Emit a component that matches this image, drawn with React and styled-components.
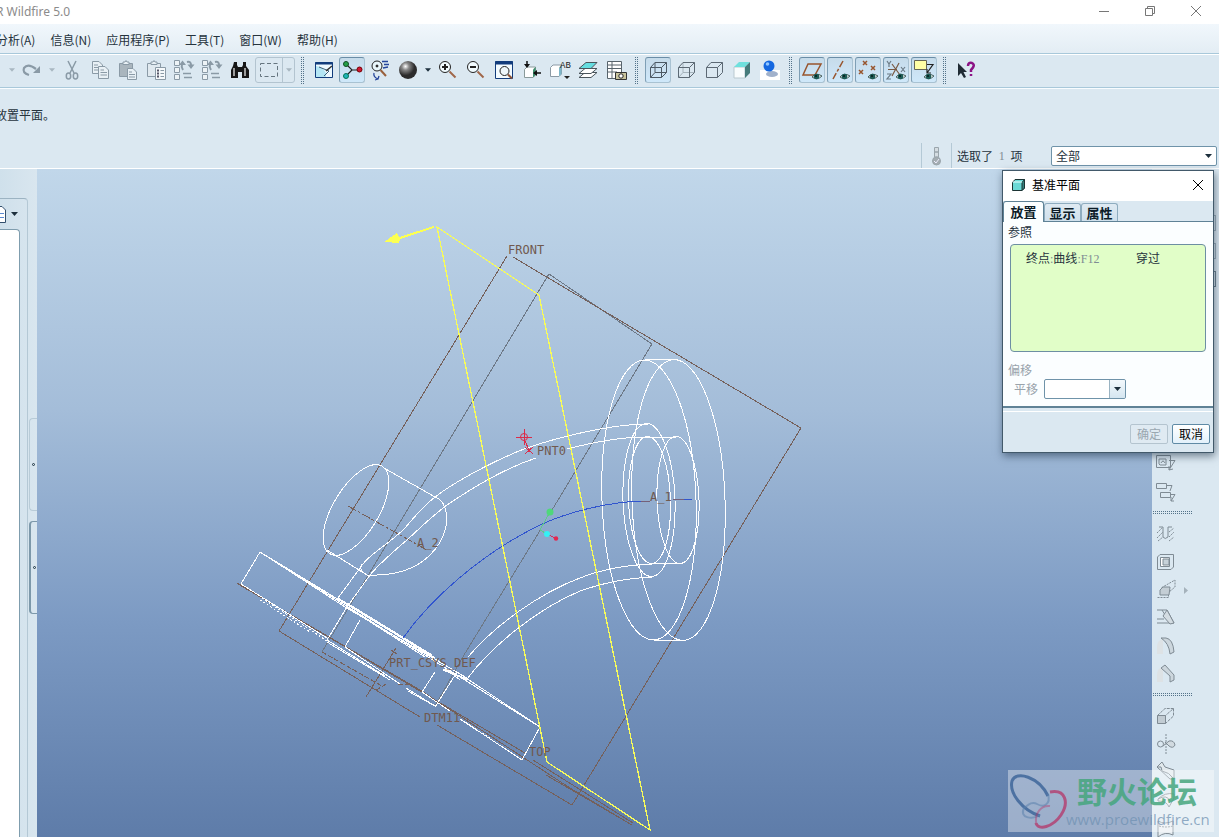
import React from "react";
import styled, { createGlobalStyle, css } from "styled-components";

const Global = createGlobalStyle`
  *, *::before, *::after { box-sizing: border-box; }
  body { margin: 0; background: #dbe8f1; }
  button, select { font: inherit; color: inherit; }
`;

const App_ = styled.div`
  min-height: 100vh;
  display: flex;
  flex-direction: column;
  overflow: hidden;
  font: 12px/16px "Noto Sans CJK SC", sans-serif;
  color: #26333d;
`;

/* ---------- window frame ---------- */
const TitleBar = styled.header`
  display: flex;
  justify-content: space-between;
  height: 24px;
  background: #fff;
`;
const Title = styled.h1`
  margin: 0 0 0 -4px;
  font: 12px/24px "Noto Sans", sans-serif;
  color: #8b8b8b;
`;
const WindowButtons = styled.div`
  display: flex;
`;
const WindowButton = styled.button`
  width: 46px;
  height: 21px;
  padding: 0;
  border: 0;
  background: none;
  color: #777;
  display: grid;
  place-items: center;
`;
const MenuBar = styled.nav`
  display: flex;
  align-items: center;
  gap: 15px;
  height: 30px;
  padding-top: 3px;
  border-bottom: 1px solid #a8c8da;
  background: linear-gradient(#f1f7fc, #e3edf4);
`;
const MenuItem = styled.button`
  padding: 0;
  border: 0;
  background: none;
  white-space: nowrap;
  &:first-child { margin-left: -4px; }
`;
const ToolBar = styled.div`
  display: flex;
  align-items: center;
  gap: 2px;
  height: 34px;
  padding-left: 7px;
  padding-bottom: 2px;
  border-top: 1px solid #fff;
  border-bottom: 1px solid #a8c8da;
  box-shadow: 0 1px #f8fcff;
`;
const toolLook = css`
  padding: 0;
  border: 1px solid transparent;
  border-radius: 3px;
  background: none;
  display: grid;
  place-items: center;
`;
const Tool = styled.button`
  ${toolLook}
  flex: none;
  width: 26px;
  height: 26px;
  ${(p) => p.$on && css`
    border-color: #6a8da6 #a9c2d2 #a9c2d2 #7f9fb5;
    background: linear-gradient(#c6dbea, #cfe8fa);
  `}
`;
const DropTool = styled(Tool)`
  width: 10px;
`;
const Grip = styled.span`
  flex: none;
  width: 12px;
  height: 27px;
  padding: 0 4px;
  background: conic-gradient(transparent 75%, #54738a 0) 0 0 / 2px 2px content-box;
`;
const RegionTool = styled.div`
  display: flex;
  width: 40px;
  height: 26px;
  border: 1px solid #b3c4d0;
  border-radius: 3px;
`;
const RegionPart = styled.button`
  ${toolLook}
  flex: ${(p) => (p.$arrow ? "0 0 12px" : "1")};
  border: 0;
  border-left: ${(p) => (p.$arrow ? "1px solid #b3c4d0" : "0")};
  border-radius: 0;
`;
const Message = styled.p`
  margin: 0 0 0 -5px;
  height: 54px;
  padding-top: 19px;
`;
const StatusRow = styled.div`
  display: flex;
  justify-content: flex-end;
  align-items: center;
  height: 27px;
  padding-top: 1px;
  padding-right: 2px;
  border-bottom: 1px solid #fff;
`;
const StatusCell = styled.span`
  display: flex;
  align-items: center;
  height: 25px;
  padding-left: ${(p) => p.$pad}px;
  width: ${(p) => p.$w}px;
  border-left: 1px solid #b4c9d6;
  white-space: pre;
`;
const Digit = styled.span`
  font-family: "Liberation Serif", serif;
  color: #7f8c94;
`;
const SelectBox = styled.span`
  display: grid;
  grid-template-columns: 1fr 15px;
  align-items: center;
  width: ${(p) => p.$w}px;
  height: 20px;
  border: 1px solid #6f93a9;
  border-radius: 2px;
  background: #fff;
  overflow: hidden;
  svg { grid-area: 1 / 2; justify-self: center; pointer-events: none; z-index: 1; }
  select {
    grid-area: 1 / 1 / 2 / 3;
    appearance: none;
    width: 100%;
    height: 18px;
    padding: 0 4px;
    border: 0;
    outline: 0;
    line-height: 18px;
    background: ${(p) => (p.$split ? "linear-gradient(#6f93a9, #6f93a9) right 15px top / 1px 100% no-repeat, linear-gradient(#eef6fb, #c3dbea) right / 15px 100% no-repeat" : "none")};
  }
`;

/* ---------- workspace ---------- */
const Workspace = styled.main`
  position: relative;
  flex: 1;
  display: flex;
  min-height: 668px;
`;
const LeftPane = styled.aside`
  flex: none;
  display: flex;
  width: 37px;
  padding-top: 29px;
  background: linear-gradient(90deg, #cfe0eb, #d9e6ef);
`;
const TreePane = styled.div`
  width: 28px;
  display: flex;
  flex-direction: column;
  border-top: 1px solid #9cb3c2;
  border-right: 1px solid #b4c8d5;
  border-top-right-radius: 4px;
`;
const TreeHead = styled.button`
  display: flex;
  align-items: center;
  gap: 4px;
  height: 30px;
  padding: 0;
  border: 0;
  background: none;
`;
const Tree = styled.div`
  flex: 1;
  width: 20px;
  border: solid #7f9dae;
  border-width: 1px 1px 0 0;
  border-top-right-radius: 4px;
  background: #fff;
`;
const Handles = styled.div`
  flex: 1;
  display: flex;
  flex-direction: column;
  gap: 10px;
  padding: 220px 0 0 1px;
`;
const Handle = styled.button`
  height: 93px;
  padding: 0;
  border: solid ${(p) => (p.$dark ? "#7c98aa" : "#b8cbd7")};
  border-width: 1px 0 1px ${(p) => (p.$dark ? 2 : 1)}px;
  border-radius: 4px 0 0 4px;
  background: none;
  display: grid;
  place-items: center;
`;
const Dot = styled.i`
  width: 3px;
  height: 3px;
  border: 1px solid #1c3340;
  border-radius: 50%;
`;
const Viewport = styled.section`
  flex: 1;
  min-width: 0;
  contain: size;
  background: linear-gradient(#c1d7ea, #a4bdd9 36%, #7c9ac3 68%, #5e7ca9);
`;
const Model = styled.svg`
  display: block;
  width: 100%;
  height: 100%;
  fill: none;
  shape-rendering: crispEdges;
  text { font: 12px "DejaVu Sans Mono", monospace; fill: #70594f; }
  circle { shape-rendering: auto; }
`;
const SideBar = styled.aside`
  flex: none;
  display: flex;
  width: 67px;
  contain: size;
  overflow: hidden;
`;
const SideColumn = styled.div`
  display: flex;
  flex-direction: column;
  gap: 2px;
  width: 40px;
  padding-top: 2px;
  padding-left: 1px;
`;
const OuterColumn = styled(SideColumn)`
  width: 24px;
  padding-top: 46px;
`;
const SideTool = styled(Tool)`
  display: flex;
  align-items: center;
  gap: 7px;
  width: 100%;
  padding-left: 1px;
  ${(p) => p.$frame && css`border-color: ${p.$frame}; border-radius: 0; height: 16px; margin-bottom: 10px;`}
`;
const SideGrip = styled.span`
  flex: none;
  height: 12px;
  padding: 4px 0;
  background: conic-gradient(transparent 75%, #54738a 0) 0 0 / 2px 2px content-box;
`;

/* ---------- dialog ---------- */
const Dialog = styled.form`
  position: absolute;
  top: 1px;
  right: 5px;
  width: 212px;
  border: 1px solid #42596a;
  background: #dbe8f1;
  box-shadow: 1px 3px 8px rgba(20, 40, 60, 0.55);
`;
const DialogTitle = styled.div`
  display: flex;
  align-items: center;
  height: 30px;
  padding: 0 9px 2px 8px;
  gap: 6px;
  background: #fff;
  color: #000;
  h2 { flex: 1; margin: 0; font-size: 12px; font-weight: 400; line-height: 16px; }
`;
const PlainButton = styled.button`
  padding: 0;
  border: 0;
  background: none;
  display: grid;
  place-items: center;
`;
const Tabs = styled.div`
  display: flex;
  align-items: flex-end;
  height: 20px;
`;
const Tab = styled.button`
  height: ${(p) => (p.$on ? 21 : 18)}px;
  margin-bottom: ${(p) => (p.$on ? -1 : 0)}px;
  width: ${(p) => (p.$on ? 41 : 37)}px;
  padding: 0;
  border: 1px solid ${(p) => (p.$on ? "#5f8296" : "#8eacbf")};
  border-bottom: 0;
  border-radius: 3px 3px 0 0;
  background: ${(p) => (p.$on ? "#fbfeff" : "linear-gradient(#dfeaf2, #cfe0ec)")};
  color: #0c1c28;
  font-weight: 700;
  font-size: 13px;
  line-height: 16px;
  z-index: ${(p) => (p.$on ? 1 : 0)};
`;
const DialogBody = styled.div`
  border: solid #5f8296;
  border-width: 1px 0 2px;
  background: #fbfeff;
  padding: 2px 7px 7px 5px;
`;
const References = styled.ul`
  list-style: none;
  height: 108px;
  margin: 4px 0 10px 2px;
  padding: 5px 0 0 15px;
  border: 1px solid #6d8fa3;
  border-radius: 4px;
  background: #e1fec8;
  li { display: grid; grid-template-columns: 110px 1fr; }
`;
const OffsetRow = styled.label`
  display: flex;
  align-items: center;
  gap: 6px;
  padding-left: 6px;
  margin-top: 1px;
`;
const Dim = styled.span`
  color: #98a3ab;
`;
const DialogFooter = styled.div`
  display: flex;
  justify-content: flex-end;
  gap: 4px;
  height: 41px;
  margin-top: 3px;
  border-top: 1px solid #fff;
  padding: 12px 3px 0;
`;
const DialogButton = styled.button`
  width: 38px;
  height: 20px;
  padding: 0;
  border: 1px solid #5f8aa5;
  border-radius: 2px;
  background: linear-gradient(#fff, #e3f1fb);
  color: #000;
  line-height: 16px;
  &:disabled { border-color: #b4c4cf; background: #dfeaf2; color: #9aa7b0; }
`;
const Watermark = styled.div`
  position: absolute;
  right: 5px;
  bottom: 5px;
  display: flex;
  width: 206px;
  height: 62px;
  background: rgba(255, 255, 255, 0.38);
  pointer-events: none;
`;
const Brand = styled.div`
  margin-left: -3px;
  white-space: nowrap;
  strong {
    display: block;
    padding-left: 11px;
    font: 700 30px/40px "Noto Sans CJK SC", sans-serif;
    color: rgba(69, 166, 125, 0.85);
  }
  span {
    display: block;
    font: 15px/18px "Open Sans", sans-serif;
    color: rgba(112, 145, 178, 0.75);
  }
`;

/* ---------- icons ---------- */
const Svg = ({ children, w = 22, h = 22, ...rest }) => (
  <svg width={w} height={h} viewBox={`0 0 ${w} ${h}`} fill="none" stroke="#8a9aa6" strokeWidth="1" aria-hidden="true" {...rest}>
    {children}
  </svg>
);
const Arrow = ({ color = "#1d2f3c", w = 7, h = 4 }) => (
  <svg width={w} height={h} viewBox="0 0 7 4" aria-hidden="true"><path d="M0 0H7L3.500 4Z" fill={color} /></svg>
);
const Eye = () => (
  <g stroke="none">
    <path d="M11 18Q15 13 21 17Q16 22 11 18Z" fill="#dfe9e8" stroke="#48605e" strokeWidth="1" />
    <circle cx="15.500" cy="17.500" r="2.700" fill="#1c5b55" /><circle cx="15" cy="17" r="1" fill="#041a1a" />
  </g>
);
const icons = {
  redo: <Svg strokeWidth="2.200"><path d="M8 16Q1 14 3 9Q7 4 15 10" /><path d="M19 7V14H12Z" fill="#8a9aa6" stroke="none" /></Svg>,
  cut: <Svg strokeWidth="1.500"><path d="M7 2L13 14M15 2L9 14" /><ellipse cx="7.500" cy="17" rx="2.200" ry="3" /><ellipse cx="14.500" cy="17" rx="2.200" ry="3" /></Svg>,
  copy: <Svg fill="#e8f0f5"><path d="M3.500 2.500H10L13.500 6V14.500H3.500Z" /><path d="M9.500 7.500H16L19.500 11V19.500H9.500Z" /><path d="M5 6H9M5 8.500H9M5 11H9M11.500 11H15M11.500 13.500H18M11.500 16H18" /></Svg>,
  paste: <Svg><path d="M2.500 4.500H15.500V17.500H2.500Z" fill="#a9b5bd" /><path d="M6 5.500V3H8L9 1.500L10 3H12V5.500Z" fill="#e8f0f5" /><path d="M10.500 9.500H16L19.500 13V20.500H10.500Z" fill="#e8f0f5" /><path d="M12 13H15M12 15.500H18M12 18H18" /></Svg>,
  pasteSpecial: <Svg><path d="M2.500 4.500H15.500V17.500H2.500Z" fill="#e0e9ef" /><path d="M6 5.500V3H8L9 1.500L10 3H12V5.500Z" fill="#e8f0f5" /><path d="M10.500 8.500H20.500V20.500H10.500Z" fill="#f5f9fb" /><path d="M12 11.500H14M12 14.500H14M12 17.500H14" stroke="#556" strokeWidth="2" /><path d="M15.500 11.500H19M15.500 14.500H19M15.500 17.500H19" /></Svg>,
  regen: <Svg><path d="M1.500 1.500H6.500V6.500H1.500ZM1.500 8.500H6.500V13.500H1.500ZM1.500 15.500H6.500V20.500H1.500Z" fill="#edf3f6" /><path d="M10 14.500H18M11 18.500H19" strokeWidth="1.500" /><path d="M10 11Q8 8 9 5M14 3Q18 2 18 6" strokeWidth="2" /><path d="M6 6L9.500 1.500L13 6ZM14.500 5.500H21.500L18 10Z" fill="#8a9aa6" stroke="none" /></Svg>,
  find: <Svg stroke="none" fill="#161616"><path d="M5 3H8V6L9 8V19H2V11L4 7ZM14 3H17V7L20 11V19H13V8L14 6Z" /><path d="M9 8H13V13H9Z" /><path d="M5 9V17M16 9V17" stroke="#c9c9c9" strokeWidth="1.500" /></Svg>,
  region: <Svg stroke="#65757f"><path d="M2.500 4.500H19.500V17.500H2.500Z" strokeDasharray="4 2.500" /></Svg>,
  repaint: <Svg><path d="M2.500 3.500H19.500V18.500H2.500Z" fill="#eef9ff" stroke="#123c7c" /><path d="M2 4.500H20" stroke="#123c7c" strokeWidth="2" /><path d="M3 7Q10 8 13 14V18H3Z" fill="#b4e6f5" stroke="none" /><path d="M6 8L16 12L11 17" stroke="#3b5f78" /><path d="M19 7L13 12" stroke="#333" strokeWidth="1.500" /></Svg>,
  spin: <Svg><path d="M5 5L11 11H18M11 11L5 17" stroke="#222" strokeWidth="1.200" /><circle cx="5" cy="5" r="2.500" fill="#23a047" stroke="#104d23" /><circle cx="18.500" cy="10.500" r="2.500" fill="#d01534" stroke="#700" /><circle cx="5" cy="17" r="2.500" fill="#20b5ba" stroke="#075" /></Svg>,
  orient: <Svg stroke="#222"><circle cx="8" cy="7" r="5" fill="#e9f6fb" /><circle cx="8" cy="7" r="1" fill="#222" /><path d="M11.500 11L17 17" stroke="#99603c" strokeWidth="2" /><path d="M13 2.500H19M15 5.500H20M14 9L19 8M5 14Q4 18 9 20L10 17M9 20L6 21" stroke="#25459b" strokeWidth="1.300" /></Svg>,
  shade: <Svg stroke="none"><defs><radialGradient id="ball" cx=".36" cy=".3"><stop stopColor="#fff" /><stop offset=".4" stopColor="#888" /><stop offset="1" stopColor="#2c2c2c" /></radialGradient></defs><circle cx="11" cy="11" r="9" fill="url(#ball)" /></Svg>,
  zoomIn: <Svg stroke="#222"><circle cx="8" cy="8" r="5.500" fill="#f1fbff" /><path d="M5 8H11M8 5V11" strokeWidth="2" /><path d="M12.500 12.500L18.500 18.500" stroke="#a0674a" strokeWidth="2" /></Svg>,
  zoomOut: <Svg stroke="#222"><circle cx="8" cy="8" r="5.500" fill="#f1fbff" /><path d="M5 8H11" strokeWidth="2" /><path d="M12.500 12.500L18.500 18.500" stroke="#a0674a" strokeWidth="2" /></Svg>,
  refit: <Svg><path d="M2.500 2.500H19.500V19.500H2.500Z" fill="#f3fbff" stroke="#123c7c" /><path d="M2 4H20" stroke="#123c7c" strokeWidth="3" /><circle cx="11.500" cy="12" r="4.500" fill="#eef7fb" stroke="#222" /><path d="M15 15.500L19 19.500" stroke="#8a5236" strokeWidth="2" /></Svg>,
  reorient: <Svg><path d="M3.500 10.500L6 8H14.500V16L12 18.500H3.500Z" fill="#fff" stroke="#8a9a9a" /><path d="M12 10.500L14.500 8V16L12 18.500Z" fill="#3b8e6c" stroke="none" /><path d="M6 2V6M20 14H15" stroke="#111" strokeWidth="1.500" /><path d="M3 5H9L6 9ZM16 11V17L12 14Z" fill="#111" stroke="none" /></Svg>,
  views: <Svg w={24}><path d="M2.500 8.500L5 6H13.500V15L11 17.500H2.500Z" fill="#fff" stroke="#8b9aa5" /><path d="M11 8.500L13.500 6V15L11 17.500Z" fill="#7db6c9" stroke="none" /><text x="12" y="9" fontSize="9" fontFamily="Liberation Mono, monospace" fill="#222" stroke="none">AB</text><path d="M16 17H22L19 20Z" fill="#222" stroke="none" /></Svg>,
  layers: <Svg stroke="#4a555c"><path d="M2 18.500L8 13.500H20L14 18.500Z" fill="#fff" /><path d="M2 14.500L8 9.500H20L14 14.500Z" fill="#fff" /><path d="M2 9.500L9 3.500H20L14 9.500Z" fill="#65dde0" /></Svg>,
  snapshot: <Svg stroke="#58646c"><path d="M2.500 2.500H16.500V19.500H2.500ZM2.500 6H16M2.500 9.500H16M2.500 13H12M7 2.500V19" fill="#fff" /><path d="M10.500 13.500H21.500V20.500H10.500Z" fill="#c9c49d" stroke="#333" /><circle cx="16" cy="17" r="2.200" fill="#fff" stroke="#222" /></Svg>,
  wire: <Svg stroke="#4c5964"><path d="M3.500 8.500H14.500V18.500H3.500ZM3.500 8.500L8 3.500H19.500L14.500 8.500M19.500 3.500V13.500L14.500 18.500M8 3.500V13.500H19.500M8 13.500L3.500 18.500" /></Svg>,
  hidden: <Svg stroke="#5c6974"><path d="M8 3.500V13.500H19.500M8 13.500L3.500 18.500" stroke="#a5b3bc" /><path d="M3.500 8.500H14.500V18.500H3.500ZM3.500 8.500L8 3.500H19.500L14.500 8.500M19.500 3.500V13.500L14.500 18.500" /></Svg>,
  noHidden: <Svg stroke="#5c6974"><path d="M3.500 8.500H14.500V18.500H3.500ZM3.500 8.500L8 3.500H19.500L14.500 8.500M19.500 3.500V13.500L14.500 18.500" /></Svg>,
  shaded: <Svg stroke="none"><path d="M3 8H14V19H3Z" fill="#f8fcfd" stroke="#b9c9d0" /><path d="M3 8L8 3H19L14 8Z" fill="#6fe0dd" /><path d="M14 8L19 3V14L14 19Z" fill="#457b7b" /></Svg>,
  realism: <Svg stroke="none"><path d="M1 11H21V21H1Z" fill="#fff" /><ellipse cx="13" cy="15" rx="6" ry="3" fill="#a1b1cb" /><circle cx="10" cy="7" r="5.500" fill="#1467e0" /><circle cx="8.500" cy="5" r="1.800" fill="#8fc5ff" /></Svg>,
  datumPlane: <Svg stroke="#98552e" strokeWidth="1.500"><path d="M7 5H20L14 16H2Z" /><Eye /></Svg>,
  datumAxis: <Svg stroke="#98552e" strokeWidth="1.500"><path d="M14 2L4 20" strokeDasharray="7 2 3 2" /><Eye /></Svg>,
  datumPoint: <Svg stroke="#98552e" strokeWidth="1.500"><path d="M6 2L10 6M10 2L6 6M14 7L18 11M18 7L14 11M2 11L6 15M6 11L2 15" /><Eye /></Svg>,
  datumCsys: <Svg stroke="#7a5a44" strokeWidth="1.200"><path d="M14 4L7 17M7 5L15 16M3 10.500H12" /><path d="M2 2L4 5L6 2M4 5V8M16 8L20 13M20 8L16 13M2 15H6L2 20H6" stroke="#6b7a85" /><Eye /></Svg>,
  annotation: <Svg><path d="M1.500 1.500H13.500V10.500H1.500Z" fill="#ffffa5" stroke="#665" /><path d="M14 5.500H20L14 14M14 10V14H18" stroke="#222" strokeWidth="1.200" /><Eye /></Svg>,
  help: <Svg stroke="none"><path d="M3 4V17L6 14L9 19L11 18L8.500 13H12Z" fill="#202b34" /><path d="M13 7Q13 3 17 4Q21 6 16 11V13M16 15V17" stroke="#8c1385" strokeWidth="2.500" /></Svg>,
};
const sideIcons = {
  annotate: <><path d="M1.500 2.500H15.500V14.500H1.500Z" /><path d="M4 11V6H11V12H5ZM6 10Q8 6 10 10" /><path d="M14 7.500H20L14 17V13M14 17L18 16" /></>,
  propagate: <><path d="M1.500 2.500H11.500V7.500H1.500ZM5.500 11.500H15.500V16.500H5.500Z" /><path d="M12 4.500H17L15 10M16 13.500H20L16 20M16 16V20H19" /></>,
  hole: <><path d="M4 4H8V14Q10 17 13 14V4H17" /><path d="M2 10L7 5M2 15L8 9M3 18L8 14M14 9L19 5M14 14L19 9M14 18L19 14" strokeDasharray="2 1" /></>,
  shell: <><path d="M2.500 6L5 3.500H18.500V16L16 18.500H2.500Z" /><path d="M5.500 6.500H14.500V15.500H5.500Z" fill="#fff" /><path d="M8 8V14H14V8Z" fill="#c7d2d9" /></>,
  rib: <><path d="M2.500 18.500H13.500V13.500L20 8V1L6 9" strokeDasharray="2 1" /><path d="M5 16V11L8 8H15L14 16Z" fill="#c4ced5" /></>,
  draft: <><path d="M2 3H12L19 16H15L7 3M2 12H9M2 16H16L8 8" /><path d="M8 9L12 3L19 16L15 17Z" fill="#d3dce2" /></>,
  round: <><path d="M2 12Q2 5 8 4V19H2Z" fill="#dde2e5" stroke="none" /><path d="M6 3H11Q18 4 19 17L15 19Q14 8 6 3Z" fill="#ccd6dd" /></>,
  chamfer: <><path d="M2 12Q2 5 8 4V19H2Z" fill="#dde2e5" stroke="none" /><path d="M6 5L10 2L19 12V17L15 19V13Z" fill="#ccd6dd" /></>,
  extrude: <><path d="M2.500 10.500H10.500V18.500H2.500Z" fill="#c2ccd3" /><path d="M2.500 10.500L10 3.500H18.500L10.500 10.500M18.500 3.500V11L10.500 18.500" strokeDasharray="3 1" /></>,
  mirror: <><path d="M11 1V21" strokeDasharray="2 1" /><circle cx="5.500" cy="11" r="3" /><path d="M8 13L14 8Q19 7 20 12Q18 16 14 13L10 9" fill="#d1dae0" /></>,
  sweep: <><path d="M2 6L7 1L10 6L19 9V18Q14 11 7 10L6 6Z" fill="#e1e9ed" /><path d="M2 6L15 18H19" /></>,
  blend: <><path d="M3 10Q10 3 19 5V9L14 18Q12 12 3 12Z" fill="#e8eef2" /><path d="M3 10Q12 5 15 12" /></>,
  boundary: <><path d="M3 4Q10 8 18 4V18Q10 14 3 20Z" fill="#e8eef2" /><path d="M4 9Q11 11 18 9" strokeDasharray="2 1" /></>,
};
const SideIcon = ({ name }) => <Svg stroke="#7f8b94">{sideIcons[name]}</Svg>;

const ToolButton = ({ id, label, on }) => <Tool type="button" $on={on} aria-label={label} aria-pressed={on}>{icons[id]}</Tool>;
const tools = (list) => list.map(([id, label, on], i) => <ToolButton key={id + i} id={id} label={label} on={on} />);

const menus = ["分析(A)", "信息(N)", "应用程序(P)", "工具(T)", "窗口(W)", "帮助(H)"];
const firstSide = ["annotate", "propagate"];
const secondSide = ["hole", "shell", "rib", "draft", "round", "chamfer"];
const thirdSide = ["extrude", "mirror", "sweep", "blend", "boundary"];

function PipeModel() {
  return (
    <Model viewBox="37 169 1115 668" preserveAspectRatio="xMinYMin slice" role="img" aria-label="弯管模型线框">
      <g stroke="#6d7886">
        <path d="M322 652L549 274L652 344L549 515M541 529L464 655L435 706" />
      </g>
      <g stroke="#75605a">
        <path d="M507 256L279 631L420 717M437 725L572 805L801 428L513 257" />
        <path d="M237 583L525 753M533 760L633 823M238 584L420 690L570 788L632 825L546 775" />
        <path d="M396 648L366 697M391 650L397 654" />
        <path d="M348 506L427 550" strokeDasharray="9 2 3 2" />
        <path d="M322 652L382 686M398 684H410M376 690L388 683" strokeDasharray="5 2" />
      </g>
      <g stroke="#fff">
        <g transform="rotate(-2 649 500)">
          <ellipse cx="649" cy="500" rx="47" ry="140" />
          <ellipse cx="649" cy="500" rx="26" ry="76.500" />
          <ellipse cx="649.500" cy="500" rx="21" ry="63.500" />
        </g>
        <g transform="rotate(-2 678 500)">
          <ellipse cx="678.500" cy="500" rx="46.500" ry="140.500" />
          <ellipse cx="678" cy="500" rx="21" ry="63.500" />
        </g>
        <path d="M645 360L674 359M654 640H683M645 437H676M652 564L680 563" />
        <path d="M648 424C607 424 549 440 524 449C496 460 457 480 435 497C422 507 412 520 404 529C390 543 370 554 363 564L338 598" />
        <path d="M645 437C620 437 594 442 567 449M536 458C500 470 468 491 447 505C432 516 418 530 407 540C394 551 379 564 370 575L347 607" />
        <path d="M652 564C628 565 600 570 580 578C540 593 495 625 468 657" />
        <path d="M652 577C628 578 602 583 580 591C540 608 495 642 467 679" />
        <ellipse cx="356" cy="510" rx="23" ry="51" transform="rotate(31 356 510)" />
        <path d="M384 468L435 497Q442 499 445 508C450 523 444 541 430 555C414 571 390 576 367 575L327 550M367 575Q358 570 362 564" />
        <path d="M260 552L241 584M260 552L540 727L522 760M260 552L345 607L467 678M260 552L430 655M241 584L327 638" />
        <path d="M457 672L540 727M338 598L440 662M347 603L432 655M347 607L425 657M343 601L435 658M443 670L467 680M445 668L460 680M467 679L443 669" />
        <path d="M347 607L327 640M360 620L345 647M435 672L422 692M457 672L435 707" />
        <path d="M327 640L385 676M327 642L390 680M345 647L400 684M406 688L435 706M408 691L433 705M422 692L450 711M460 719L522 760" />
        <path d="M262 598L327 641M260 600L310 632M465 722L490 738" strokeDasharray="2 2" />
      </g>
      <path d="M403 638C430 600 480 554 540 525C570 511 610 502 642 501M684 499H692" stroke="#3155ce" />
      <path d="M641 501H650M673 499H684" stroke="#756078" />
      <path d="M437 227L539 295L650 830L547 762Z" stroke="#f7fb5a" strokeWidth="1.300" />
      <path d="M384 242L397 233L399 237L434 226V228L400 239L399 243Z" fill="#fbff53" />
      <g stroke="#dc2b49"><circle cx="524" cy="437" r="3.500" /><path d="M516 437.500H532M524.500 429V445M525 441L529 450M525 447L533 454M533 447L525 454" /></g>
      <path d="M550 512L540 530L547 534" stroke="#5fc98c" />
      <path d="M547 534L556 538.500" stroke="#d62a5e" />
      <circle cx="550" cy="512" r="3.500" fill="#4fd87a" /><circle cx="547" cy="534" r="3" fill="#34f0f4" /><circle cx="556" cy="538.500" r="2.200" fill="#e5264f" />
      <text x="508" y="254">FRONT</text>
      <text x="537" y="455">PNT0</text>
      <text x="650" y="501">A_1</text>
      <text x="417" y="547">A_2</text>
      <text x="389" y="667">PRT_CSYS_DEF</text>
      <text x="424" y="722">DTM11</text>
      <text x="529" y="756">TOP</text>
    </Model>
  );
}

export default function App() {
  return (
    <App_>
      <Global />
      <TitleBar>
        <Title>R Wildfire 5.0</Title>
        <WindowButtons>
          <WindowButton aria-label="最小化"><Svg w={12} h={12} stroke="#777"><path d="M1 6.500H11" /></Svg></WindowButton>
          <WindowButton aria-label="还原"><Svg w={12} h={12} stroke="#777"><path d="M1.500 3.500H8.500V10.500H1.500ZM3.500 3V1.500H10.500V8.500H9" /></Svg></WindowButton>
          <WindowButton aria-label="关闭"><Svg w={12} h={12} stroke="#777"><path d="M1 1L11 11M11 1L1 11" /></Svg></WindowButton>
        </WindowButtons>
      </TitleBar>
      <MenuBar>{menus.map((m) => <MenuItem key={m} type="button">{m}</MenuItem>)}</MenuBar>
      <ToolBar>
        <DropTool type="button" aria-label="撤消列表"><Arrow color="#a9b7c1" w={6} /></DropTool>
        <ToolButton id="redo" label="重做" />
        <DropTool type="button" aria-label="重做列表"><Arrow color="#a9b7c1" w={6} /></DropTool>
        {tools([["cut", "剪切"], ["copy", "复制"], ["paste", "粘贴"], ["pasteSpecial", "选择性粘贴"], ["regen", "再生"], ["regen", "再生管理器"], ["find", "查找"]])}
        <RegionTool>
          <RegionPart type="button" aria-label="选取框">{icons.region}</RegionPart>
          <RegionPart type="button" $arrow aria-label="选取选项"><Arrow color="#a9b7c1" w={6} /></RegionPart>
        </RegionTool>
        <Grip />
        {tools([["repaint", "重画"], ["spin", "旋转中心", true], ["orient", "定向模式"], ["shade", "外观库"]])}
        <DropTool type="button" aria-label="外观列表"><Arrow w={6} /></DropTool>
        {tools([["zoomIn", "放大"], ["zoomOut", "缩小"], ["refit", "重新调整"], ["reorient", "重定向"], ["views", "视图列表"], ["layers", "层"], ["snapshot", "视图管理器"]])}
        <Grip />
        {tools([["wire", "线框", true], ["hidden", "隐藏线"], ["noHidden", "无隐藏线"], ["shaded", "着色"], ["realism", "增强的真实感"]])}
        <Grip />
        {tools([["datumPlane", "平面显示", true], ["datumAxis", "轴显示", true], ["datumPoint", "点显示", true], ["datumCsys", "坐标系显示", true], ["annotation", "注释显示", true]])}
        <Grip />
        <ToolButton id="help" label="上下文帮助" />
      </ToolBar>
      <Message>放置平面。</Message>
      <StatusRow>
        <StatusCell $w={30} $pad={4}>
          <Svg w={20} h={22} stroke="#9aa5ac"><path d="M8.500 2.500H12.500V7H8.500ZM8.500 7H12.500V12H8.500Z" fill="#d5dde2" /><circle cx="10.500" cy="16" r="4" fill="#a4adb2" /><path d="M8 16L10 18L13 14" stroke="#eef" /></Svg>
        </StatusCell>
        <StatusCell $w={100} $pad={5}>选取了 <Digit> 1 </Digit> 项</StatusCell>
        <SelectBox $w={166}>
          <select aria-label="过滤器" defaultValue="全部"><option>全部</option></select>
          <Arrow />
        </SelectBox>
      </StatusRow>
      <Workspace>
        <LeftPane>
          <TreePane>
            <TreeHead type="button" aria-label="显示">
              <Svg w={7} h={20} stroke="#33506e"><path d="M0 2.500H2L5.500 6V18.500H0" fill="#fff" /><path d="M0 9.500H4M0 13.500H4" stroke="#5b8ad0" /></Svg>
              <Arrow w={7} />
            </TreeHead>
            <Tree />
          </TreePane>
          <Handles>
            <Handle type="button" aria-label="导航器"><Dot /></Handle>
            <Handle type="button" $dark aria-label="浏览器"><Dot /></Handle>
          </Handles>
        </LeftPane>
        <Viewport><PipeModel /></Viewport>
        <SideBar>
          <SideColumn>
            {secondSide.concat(thirdSide).slice(0, 10).map((n) => <SideTool key={n} type="button" aria-label={n}><SideIcon name={n} /></SideTool>)}
            {firstSide.map((n) => <SideTool key={n} type="button" aria-label={n}><SideIcon name={n} /></SideTool>)}
            <SideGrip />
            {secondSide.map((n) => (
              <SideTool key={n} type="button" aria-label={n}>
                <SideIcon name={n} />
                {n === "rib" && <svg width="4" height="7" aria-hidden="true"><path d="M0 0L4 3.500L0 7Z" fill="#a5b2bb" /></svg>}
              </SideTool>
            ))}
            <SideGrip />
            {thirdSide.map((n) => <SideTool key={n} type="button" aria-label={n}><SideIcon name={n} /></SideTool>)}
          </SideColumn>
          <OuterColumn>
            <SideTool type="button" $frame="#9fb0bc" aria-label="草绘" />
            <SideTool type="button" $frame="#9fb0bc" aria-label="基准" />
            <SideTool type="button" $frame="#6f8290" aria-label="分析" />
          </OuterColumn>
        </SideBar>
        <Dialog onSubmit={(e) => e.preventDefault()}>
          <DialogTitle>
            <Svg w={15} h={14} stroke="#1c3434"><path d="M1.500 4.500L4 1.500H13.500V10L11 12.500H1.500Z" fill="#6ad9d6" /><path d="M11 4.500L13.500 1.500V10L11 12.500Z" fill="#34817e" /><path d="M2 4H11" stroke="#e9ffff" /></Svg>
            <h2>基准平面</h2>
            <PlainButton type="button" aria-label="关闭"><Svg w={12} h={12} stroke="#000"><path d="M1 1L11 11M11 1L1 11" /></Svg></PlainButton>
          </DialogTitle>
          <Tabs role="tablist">
            <Tab type="button" role="tab" aria-selected="true" $on>放置</Tab>
            <Tab type="button" role="tab">显示</Tab>
            <Tab type="button" role="tab">属性</Tab>
          </Tabs>
          <DialogBody>
            <div>参照</div>
            <References>
              <li><span>终点<Digit>:</Digit>曲线<Digit>:F12</Digit></span><span>穿过</span></li>
            </References>
            <Dim>偏移</Dim>
            <OffsetRow>
              <Dim>平移</Dim>
              <SelectBox $w={82} $split>
                <select aria-label="平移" disabled />
                <Arrow />
              </SelectBox>
            </OffsetRow>
          </DialogBody>
          <DialogFooter>
            <DialogButton type="submit" disabled>确定</DialogButton>
            <DialogButton type="button">取消</DialogButton>
          </DialogFooter>
        </Dialog>
        <Watermark>
          <svg width="61" height="62" viewBox="0 0 61 62" fill="none" aria-hidden="true">
            <path d="M32 46C14 40 1 23 4 11C8 0 31 7 40 26" stroke="#315c93" strokeOpacity=".75" strokeWidth="3" />
            <path d="M40 24C43 34 36 38 29 34C24 31 20 35 16 38C11 48 24 50 32 45" stroke="#5b82ad" strokeOpacity=".55" strokeWidth="2" />
            <path d="M42 22C58 19 61 33 53 45C45 57 30 61 28 53" stroke="#b62c61" strokeOpacity=".7" strokeWidth="3" />
            <path d="M28 53C27 43 33 35 42 36" stroke="#b62c61" strokeOpacity=".4" strokeWidth="2" />
          </svg>
          <Brand><strong>野火论坛</strong><span>www.proewildfire.cn</span></Brand>
        </Watermark>
      </Workspace>
    </App_>
  );
}
